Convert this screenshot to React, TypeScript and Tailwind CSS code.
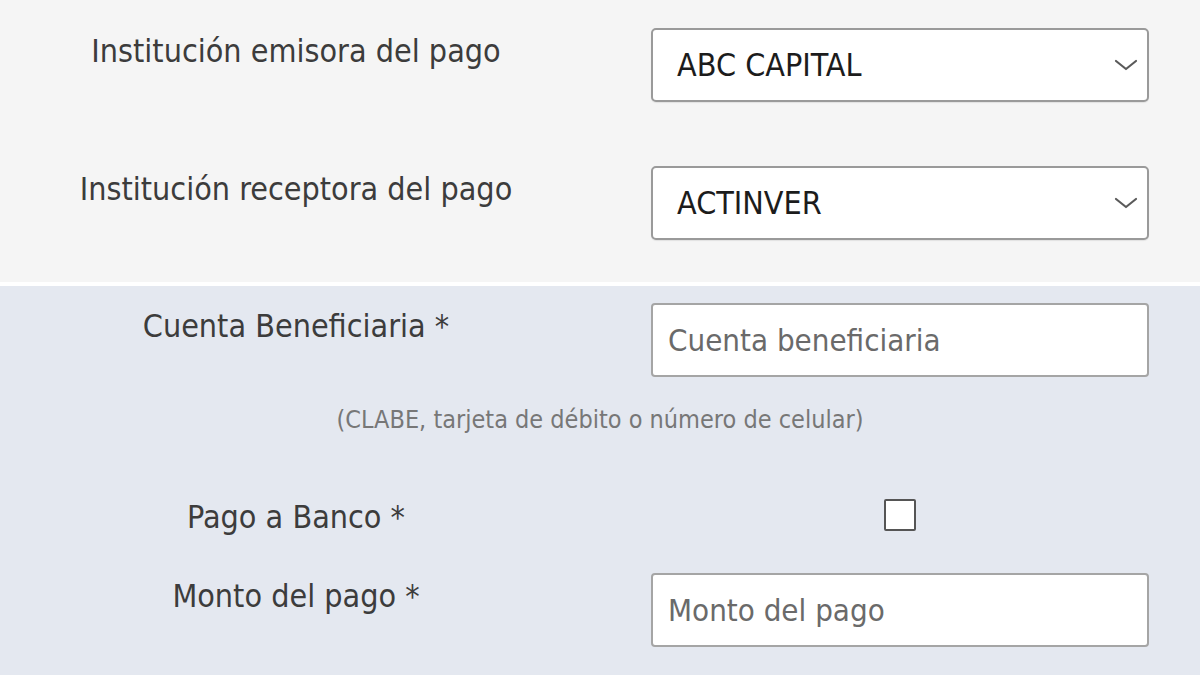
import React from "react";

const Chevron = () => (
  <svg width="24" height="12" viewBox="0 0 24 12" fill="none">
    <path d="M2 2 L12 10 L22 2" stroke="#5a5a5a" strokeWidth="2.2" strokeLinecap="round" strokeLinejoin="round" />
  </svg>
);

function SelectBox({ value }: { value: string }) {
  return (
    <div className="flex h-[74px] w-[498px] items-center justify-between rounded-[5px] border-2 border-[#9a9a9a] bg-white pl-[24px] pr-[9px] shadow-[0_1px_1px_rgba(0,0,0,0.08)]">
      <span className="text-[32px] leading-[38px] text-[#1c1c1c]">{value}</span>
      <Chevron />
    </div>
  );
}

function InputBox({ placeholder }: { placeholder: string }) {
  return (
    <div className="flex h-[74px] w-[498px] items-center rounded-[4px] border-2 border-[#a5a5a5] bg-white pl-[15px]">
      <span className="text-[31px] leading-[38px] text-[#6a6a6a]">{placeholder}</span>
    </div>
  );
}

function Label({ children }: { children: React.ReactNode }) {
  return (
    <div className="pt-[4px] text-center text-[32px] leading-[38px] text-[#3c3c3c]">{children}</div>
  );
}

export default function App() {
  return (
    <div className="h-[675px] w-[1200px] overflow-hidden bg-[#e4e8f0] font-['DejaVu_Sans_Condensed','DejaVu_Sans',sans-serif]">
      <div className="flex h-[282px] flex-col bg-[#f5f5f5] pt-[28px]">
        <div className="grid grid-cols-[592px_498px] gap-x-[59px]">
          <Label>Institución emisora del pago</Label>
          <SelectBox value="ABC CAPITAL" />
        </div>
        <div className="mt-[64px] grid grid-cols-[592px_498px] gap-x-[59px]">
          <Label>Institución receptora del pago</Label>
          <SelectBox value="ACTINVER" />
        </div>
      </div>
      <div className="h-[4px] bg-white" />
      <div className="flex flex-col pt-[17px]">
        <div className="grid grid-cols-[592px_498px] gap-x-[59px]">
          <Label>Cuenta Beneficiaria *</Label>
          <InputBox placeholder="Cuenta beneficiaria" />
        </div>
        <div className="mt-[27px] text-center text-[25px] leading-[32px] text-[#777]">
          (CLABE, tarjeta de débito o número de celular)
        </div>
        <div className="mt-[58px] grid grid-cols-[592px_498px] items-center gap-x-[59px]">
          <div className="pt-[4px] text-center text-[32px] leading-[38px] text-[#3c3c3c]">Pago a Banco *</div>
          <div className="flex justify-center">
            <div className="h-[32px] w-[32px] rounded-[2px] border-2 border-[#555] bg-white" />
          </div>
        </div>
        <div className="mt-[37px] grid grid-cols-[592px_498px] gap-x-[59px]">
          <Label>Monto del pago *</Label>
          <InputBox placeholder="Monto del pago" />
        </div>
      </div>
    </div>
  );
}
